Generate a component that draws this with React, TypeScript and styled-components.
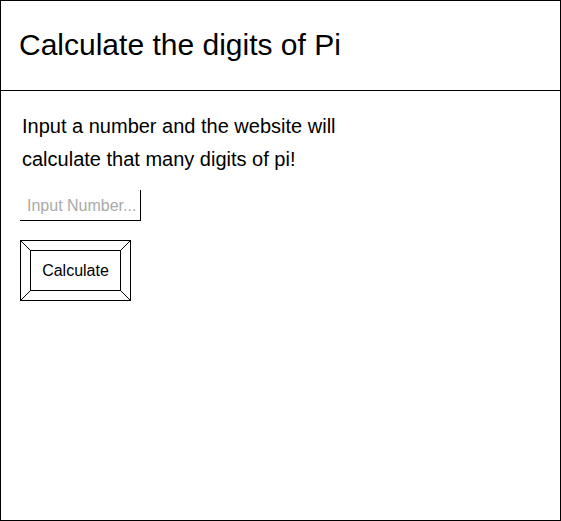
import styled, { createGlobalStyle } from 'styled-components';

const GlobalStyle = createGlobalStyle`
	html, body {
		margin: 0;
		padding: 0;
		background: white;
	}
	* {
		box-sizing: border-box;
	}
`;

const Frame = styled.div`
	width: 561px;
	height: 521px;
	border: 1px solid black;
	background: white;
	font-family: 'Liberation Sans', Arial, sans-serif;
	color: black;
	display: flex;
	flex-direction: column;
`;

const Header = styled.header`
	height: 90px;
	border-bottom: 1px solid black;
	display: flex;
	align-items: center;
	padding-left: 18px;
`;

const Title = styled.h1`
	margin: 0;
	font-size: 30px;
	font-weight: normal;
	padding-bottom: 2px;
`;

const Content = styled.main`
	padding: 19px 19px;
	display: flex;
	flex-direction: column;
	align-items: flex-start;
`;

const Intro = styled.p`
	margin: 0 0 0 2px;
	font-size: 20px;
	line-height: 33px;
	width: 340px;
`;

const NumberInput = styled.input`
	margin-top: 14px;
	width: 121px;
	height: 31px;
	border: none;
	border-right: 1px solid black;
	border-bottom: 1px solid black;
	padding: 2px 0 0 7px;
	font-family: 'Liberation Sans', Arial, sans-serif;
	font-size: 16px;
	outline: none;
	&::placeholder {
		color: #aaaaaa;
	}
`;

const ButtonFrame = styled.div`
	position: relative;
	margin-top: 19px;
	width: 111px;
	height: 61px;
	border: 1px solid black;
	padding: 9px;
`;

const Bevel = styled.svg`
	position: absolute;
	inset: -1px;
	pointer-events: none;
`;

const ButtonFace = styled.button`
	width: 91px;
	height: 41px;
	border: 1px solid black;
	background: white;
	font-family: 'Liberation Sans', Arial, sans-serif;
	font-size: 16px;
	color: black;
	padding: 0;
	cursor: pointer;
`;

export default function App() {
	return (
		<>
			<GlobalStyle />
			<Frame>
				<Header>
					<Title>Calculate the digits of Pi</Title>
				</Header>
				<Content>
					<Intro>Input a number and the website will calculate that many digits of pi!</Intro>
					<NumberInput type="text" inputMode="numeric" placeholder="Input Number..." />
					<ButtonFrame>
						<Bevel width="111" height="61" viewBox="0 0 111 61">
							<path
								d="M0.5 0.5 L10.5 10.5 M110.5 0.5 L100.5 10.5 M0.5 60.5 L10.5 50.5 M110.5 60.5 L100.5 50.5"
								stroke="black"
								strokeWidth="1"
							/>
						</Bevel>
						<ButtonFace>Calculate</ButtonFace>
					</ButtonFrame>
				</Content>
			</Frame>
		</>
	);
}
